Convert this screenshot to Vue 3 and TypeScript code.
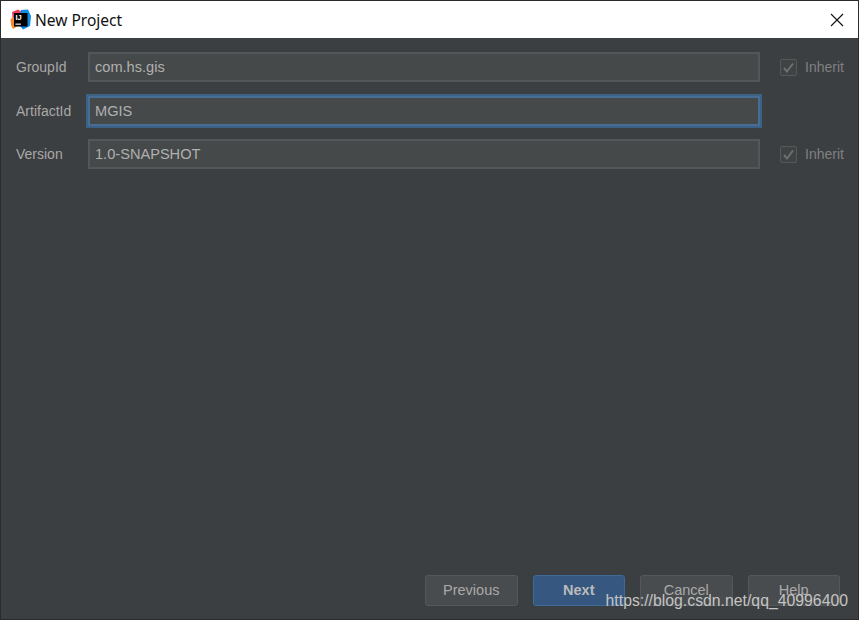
<script setup lang="ts">
const rows = [
  { label: 'GroupId', value: 'com.hs.gis', inherit: true, focused: false },
  { label: 'ArtifactId', value: 'MGIS', inherit: false, focused: true },
  { label: 'Version', value: '1.0-SNAPSHOT', inherit: true, focused: false }
]
const buttons = [
  { text: 'Previous', primary: false },
  { text: 'Next', primary: true },
  { text: 'Cancel', primary: false },
  { text: 'Help', primary: false }
]
</script>

<template>
  <div class="window">
    <header class="titlebar">
      <svg class="logo" width="21" height="21" viewBox="0 0 21 21">
        <path d="M2 3 L8 0.5 L12 3 L10 13 L3 15 Z" fill="#f2405f" />
        <path d="M0.5 10 L4 8 L8 17 L3 20 L1 16 Z" fill="#f68a2e" />
        <path d="M11 1 L18 0.5 L21 7 L20 17 L13 20.5 L9 16 Z" fill="#0e8de6" />
        <rect x="4" y="4" width="13.5" height="13.5" fill="#000" />
        <text x="5.4" y="11.4" class="logo-text">IJ</text>
        <rect x="5.4" y="14.6" width="5.5" height="1.1" fill="#fff" />
      </svg>
      <span class="title">New Project</span>
      <svg class="close" width="14" height="14" viewBox="0 0 14 14">
        <path d="M1 1 L13 13 M13 1 L1 13" stroke="#111" stroke-width="1.1" fill="none" />
      </svg>
    </header>

    <main class="body">
      <div class="form">
        <div v-for="row in rows" :key="row.label" class="row">
          <label class="label">{{ row.label }}</label>
          <div class="input" :class="{ focused: row.focused }">{{ row.value }}</div>
          <div v-if="row.inherit" class="inherit">
            <span class="checkbox">
              <svg width="13" height="13" viewBox="0 0 13 13">
                <path d="M2 7 L5 10.5 L11 2.5" stroke="#6e7071" stroke-width="2" fill="none" />
              </svg>
            </span>
            <span>Inherit</span>
          </div>
        </div>
      </div>

      <footer class="footer">
        <button v-for="b in buttons" :key="b.text" class="btn" :class="{ primary: b.primary }">{{ b.text }}</button>
        <span class="watermark">https://blog.csdn.net/qq_40996400</span>
      </footer>
    </main>
  </div>
</template>

<style scoped>
.window {
  width: 859px;
  height: 620px;
  box-sizing: border-box;
  display: flex;
  flex-direction: column;
  background: #2b2b2b;
  padding: 1px;
  font-family: "Liberation Sans", Arial, sans-serif;
}
.titlebar {
  height: 37px;
  flex: none;
  background: #fff;
  display: flex;
  align-items: center;
  padding: 0 14px 0 9px;
}
.logo-text {
  font-family: "Liberation Sans", Arial, sans-serif;
  font-size: 7.5px;
  font-weight: 700;
  fill: #fff;
}
.title {
  margin-left: 4px;
  font-family: "Noto Sans", "Liberation Sans", sans-serif;
  font-size: 15.5px;
  color: #111;
}
.close {
  margin-left: auto;
}
.body {
  flex: 1;
  background: #3c3f41;
  display: flex;
  flex-direction: column;
  justify-content: space-between;
  color: #a8a8a8;
  font-size: 14px;
}
.form {
  padding: 14px 15px 0 15px;
  display: flex;
  flex-direction: column;
  gap: 13.5px;
}
.row {
  display: flex;
  align-items: center;
  height: 30px;
}
.label {
  width: 72px;
  flex: none;
}
.input {
  width: 672px;
  height: 30px;
  box-sizing: border-box;
  flex: none;
  border: 2px solid #54575a;
  background: #45494a;
  color: #b0b0b0;
  padding-left: 5px;
  line-height: 26px;
  font-size: 14.6px;
}
.input.focused {
  border-color: #466d94;
  box-shadow: 0 0 0 2px #3d6185;
}
.inherit {
  display: flex;
  align-items: center;
  margin-left: 20px;
  color: #7f8081;
}
.checkbox {
  width: 15px;
  height: 15px;
  margin-right: 8px;
  border: 1px solid #565859;
  border-radius: 2px;
  background: #404344;
  display: flex;
  align-items: center;
  justify-content: center;
}
.footer {
  position: relative;
  display: flex;
  justify-content: flex-end;
  gap: 15px;
  padding: 0 18px 13px 0;
}
.btn {
  width: 92.5px;
  height: 31px;
  box-sizing: border-box;
  border: 1px solid #55585a;
  border-radius: 3px;
  background: #494c4e;
  color: #a9a9a9;
  font: inherit;
  font-size: 14.5px;
  padding: 0 0 2px;
}
.btn.primary {
  background: #365880;
  border-color: #3f6a97;
  color: #bbbbbb;
  font-weight: 700;
}
.watermark {
  position: absolute;
  right: 10px;
  bottom: 9px;
  font-size: 15.8px;
  color: #c4c4c4;
}
</style>
